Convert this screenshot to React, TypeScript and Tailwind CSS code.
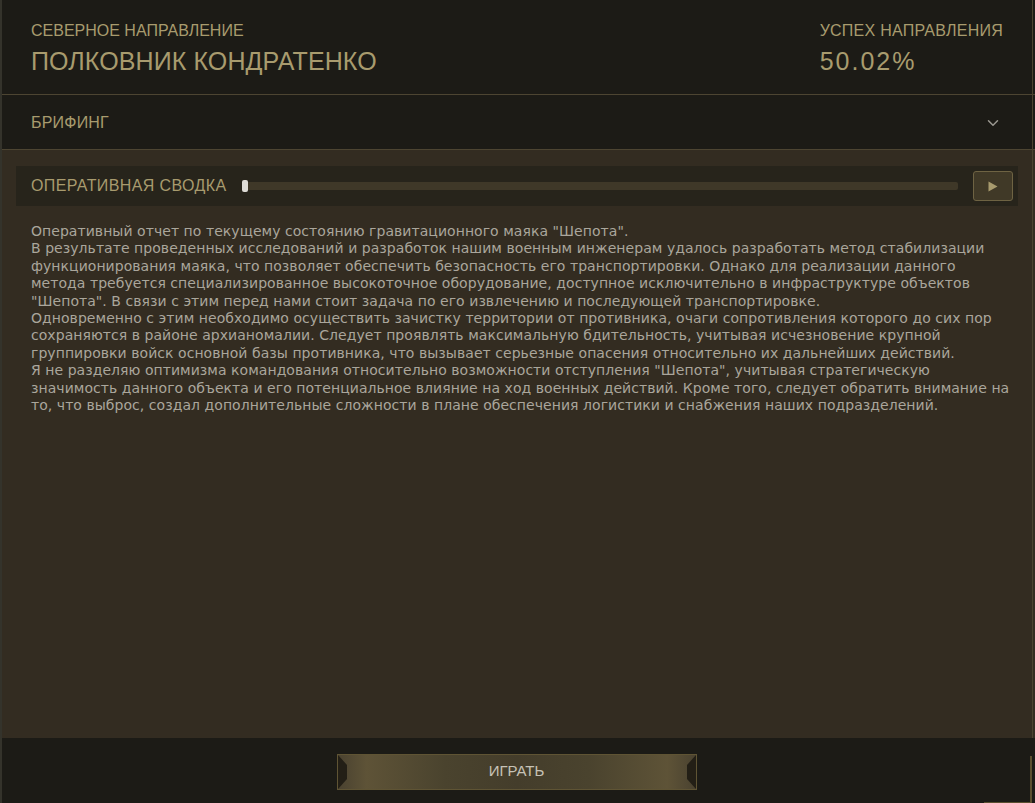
import { ChevronDown } from 'lucide-react'

const briefing = [
  'Оперативный отчет по текущему состоянию гравитационного маяка "Шепота".',
  'В результате проведенных исследований и разработок нашим военным инженерам удалось разработать метод стабилизации функционирования маяка, что позволяет обеспечить безопасность его транспортировки. Однако для реализации данного метода требуется специализированное высокоточное оборудование, доступное исключительно в инфраструктуре объектов "Шепота". В связи с этим перед нами стоит задача по его извлечению и последующей транспортировке.',
  'Одновременно с этим необходимо осуществить зачистку территории от противника, очаги сопротивления которого до сих пор сохраняются в районе архианомалии. Следует проявлять максимальную бдительность, учитывая исчезновение крупной группировки войск основной базы противника, что вызывает серьезные опасения относительно их дальнейших действий.',
  'Я не разделяю оптимизма командования относительно возможности отступления "Шепота", учитывая стратегическую значимость данного объекта и его потенциальное влияние на ход военных действий. Кроме того, следует обратить внимание на то, что выброс, создал дополнительные сложности в плане обеспечения логистики и снабжения наших подразделений.',
]

const App = () => {
  return (
    <div className="relative flex h-[803px] w-[1035px] flex-col overflow-hidden bg-[#1c1b16] font-['Liberation_Sans',sans-serif]">
      {/* frame edges */}
      <div className="absolute left-0 top-0 h-full w-[2px] bg-[#34332b]" />
      <div className="absolute right-[2px] top-0 h-[738px] w-px bg-[#4a4330]" />
      <div className="absolute bottom-0 right-[3px] h-[47px] w-[2px] bg-[#5a4f30]" />
      <div className="absolute bottom-0 right-[3px] h-px w-[48px] bg-[#5a4f30]" />

      {/* header */}
      <header className="flex h-[95px] items-start justify-between border-b border-[#4d4532] pl-[31px] pr-[32px] pt-[21px] text-[#a89b6e]">
        <div className="flex flex-col">
          <span className="text-[16px] leading-[20px]">СЕВЕРНОЕ НАПРАВЛЕНИЕ</span>
          <span className="mt-[5px] text-[25px] leading-[30px] tracking-[0.1px]">ПОЛКОВНИК КОНДРАТЕНКО</span>
        </div>
        <div className="flex flex-col">
          <span className="text-[16px] leading-[20px] tracking-[0.25px]">УСПЕХ НАПРАВЛЕНИЯ</span>
          <span className="mt-[5px] text-[25px] leading-[30px] tracking-[2px]">50.02%</span>
        </div>
      </header>

      {/* briefing toggle */}
      <div className="flex h-[55px] items-center justify-between border-b border-[#4d4532] pl-[31px] pr-[33px] pt-[2px] text-[#a89b6e]">
        <span className="text-[16px] tracking-[0.2px]">БРИФИНГ</span>
        <ChevronDown className="h-[18px] w-[18px] text-[#9a9890]" strokeWidth={2} />
      </div>

      {/* content */}
      <main className="flex flex-1 flex-col bg-[#332c21] pl-[16px] pr-[17px] pt-[16px]">
        <div className="flex h-[40px] items-center bg-[#27241b] pl-[15px] pr-[5px]">
          <span className="text-[16px] tracking-[0.4px] text-[#a89b6e]">ОПЕРАТИВНАЯ СВОДКА</span>
          <div className="relative ml-[15px] flex h-[8px] flex-1 items-center rounded-[2px] bg-[#3f3828]">
            <div className="absolute left-0 h-[12px] w-[6px] rounded-[2px] bg-[#dedcd6]" />
          </div>
          <button className="ml-[15px] flex h-[30px] w-[40px] items-center justify-center rounded-[3px] border border-[#6e6343] bg-[#403927]">
            <svg width="10" height="11" viewBox="0 0 10 11">
              <path d="M0.5 0.5 L9.5 5.5 L0.5 10.5 Z" fill="#a89b6e" />
            </svg>
          </button>
        </div>

        <div className="mt-[17px] pl-[15px] pr-[7px] font-['DejaVu_Sans',sans-serif] text-[14px] leading-[17.4px] tracking-[0.05px] text-[#aaa69c]">
          {briefing.map((p, i) => (
            <p key={i}>{p}</p>
          ))}
        </div>
      </main>

      {/* footer */}
      <footer className="flex h-[65px] items-center justify-center pt-[2px]">
        <button className="relative h-[36px] w-[360px] -translate-x-px border border-[#5f5434] bg-[linear-gradient(90deg,#4a4230_0%,#5e5337_8%,#4a432e_30%,#443d2b_50%,#4a432e_70%,#5e5337_92%,#4a4230_100%)] text-[15px] text-[#c6c2b6]">
          <svg className="absolute left-0 top-0" width="10" height="34" viewBox="0 0 10 34">
            <path d="M0 0 L9 10 L9 24 L0 34 Z" fill="#231f16" />
          </svg>
          <svg className="absolute right-0 top-0" width="10" height="34" viewBox="0 0 10 34">
            <path d="M10 0 L1 10 L1 24 L10 34 Z" fill="#231f16" />
          </svg>
          ИГРАТЬ
        </button>
      </footer>
    </div>
  )
}

export default App
